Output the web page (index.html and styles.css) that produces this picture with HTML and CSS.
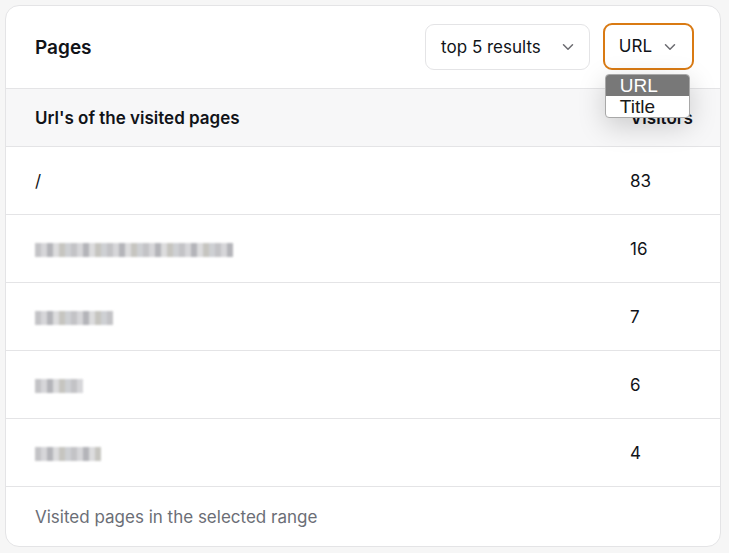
FILE: index.html
```html
<!DOCTYPE html>
<html lang="en">
<head>
<meta charset="utf-8">
<title>Pages</title>
<link rel="stylesheet" href="styles.css">
</head>
<body>
<div class="card">
  <div class="card-header">
    <h2 class="title">Pages</h2>
    <div class="controls">
      <div class="select">
        <span>top 5 results</span>
        <svg class="chev" width="12" height="8" viewBox="0 0 12 8"><path d="M1.5 1.8 L6 6.2 L10.5 1.8" fill="none" stroke="#6b6b70" stroke-width="1.5" stroke-linecap="round" stroke-linejoin="round"/></svg>
      </div>
      <div class="select select-active">
        <span>URL</span>
        <svg class="chev" width="12" height="8" viewBox="0 0 12 8"><path d="M1.5 1.8 L6 6.2 L10.5 1.8" fill="none" stroke="#6b6b70" stroke-width="1.5" stroke-linecap="round" stroke-linejoin="round"/></svg>
        <ul class="menu">
          <li class="menu-item is-selected">URL</li>
          <li class="menu-item">Title</li>
        </ul>
      </div>
    </div>
  </div>
  <div class="row row-head">
    <div class="cell">Url's of the visited pages</div>
    <div class="cell num">Visitors</div>
  </div>
  <div class="row">
    <div class="cell">/</div>
    <div class="cell num">83</div>
  </div>
  <div class="row">
    <div class="cell"><span class="blur" style="width:198px"></span></div>
    <div class="cell num">16</div>
  </div>
  <div class="row">
    <div class="cell"><span class="blur" style="width:78px"></span></div>
    <div class="cell num">7</div>
  </div>
  <div class="row">
    <div class="cell"><span class="blur" style="width:48px"></span></div>
    <div class="cell num">6</div>
  </div>
  <div class="row">
    <div class="cell"><span class="blur" style="width:66px"></span></div>
    <div class="cell num">4</div>
  </div>
  <div class="card-footer">Visited pages in the selected range</div>
</div>
</body>
</html>
```

FILE: styles.css
```css
* { box-sizing: border-box; }
html, body { margin: 0; padding: 0; }
body {
  background: #f6f6f6;
  font-family: Inter, "Liberation Sans", sans-serif;
  color: #111318;
  padding: 5px 8px 6px 5px;
}
.card {
  background: #fff;
  border: 1px solid #e4e4e6;
  border-radius: 14px;
  width: 716px;
  height: 542px;
  display: flex;
  flex-direction: column;
}
.card-header {
  height: 83px;
  display: flex;
  align-items: center;
  justify-content: space-between;
  padding: 0 26px 0 29px;
  border-bottom: 1px solid #e4e4e6;
}
.title {
  margin: 0;
  font-size: 19px;
  font-weight: 600;
  padding-top: 1px;
}
.controls {
  display: flex;
  gap: 13px;
  align-items: center;
}
.select {
  position: relative;
  height: 46px;
  display: flex;
  align-items: center;
  gap: 21px;
  padding: 0 15px 0 15px;
  border: 1px solid #e4e4e6;
  border-radius: 9px;
  font-size: 17px;
  color: #111318;
  background: #fff;
}
.select span { padding-bottom: 1px; }
.select-active {
  border: 2px solid #d97a13;
  height: 47px;
  gap: 12px;
  padding: 0 16px 0 14px;
  margin-top: -1px;
}
.chev { display: block; }
.menu {
  position: absolute;
  top: 49px;
  left: 0;
  width: 85px;
  margin: 0;
  padding: 0;
  list-style: none;
  background: #fff;
  border: 1px solid #a8a8a8;
  border-radius: 4px;
  overflow: hidden;
  box-shadow: 0 8px 28px rgba(0,0,0,0.18);
  font-family: "Liberation Sans", Arial, sans-serif;
  font-size: 19px;
  z-index: 5;
}
.menu-item {
  height: 21px;
  line-height: 21px;
  padding-left: 14px;
  color: #1a1a1a;
}
.menu-item.is-selected {
  background: #787878;
  color: #fff;
}
.row {
  display: grid;
  grid-template-columns: 1fr 90px;
  align-items: center;
  height: 68px;
  border-bottom: 1px solid #e4e4e6;
  font-size: 17px;
}
.row-head {
  height: 58px;
  background: #f7f7f8;
  font-weight: 600;
}
.cell { padding-left: 29px; }
.cell.num { padding-left: 0; }
.blur {
  display: inline-block;
  height: 14px;
  vertical-align: middle;
  background:
    repeating-linear-gradient(90deg, #b9b9bd 0 6px, #cfcfd3 6px 12px, #a7a8ad 12px 18px, #d6d6d8 18px 24px, #bdbcb6 24px 30px, #c6c8cc 30px 36px);
  filter: blur(1px);
  opacity: 0.85;
}
.card-footer {
  flex: 1;
  display: flex;
  align-items: center;
  padding-left: 29px;
  font-size: 17px;
  color: #6b6e76;
}
```
